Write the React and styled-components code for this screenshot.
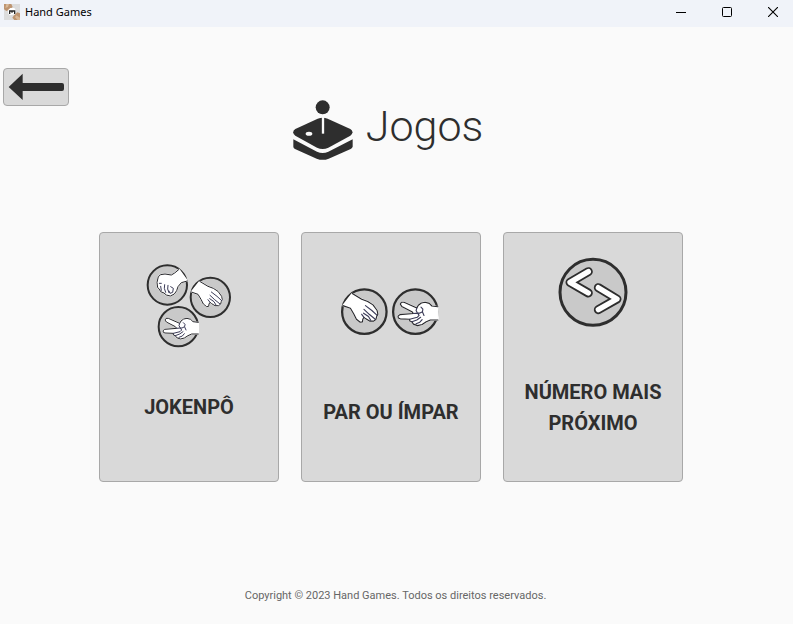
import React from "react";
import styled, { createGlobalStyle } from "styled-components";

const ink = "#2e2e2e";

const GlobalStyle = createGlobalStyle`
  * { box-sizing: border-box; }
  body { margin: 0; background: #fafafa; color: ${ink}; font-family: Roboto, sans-serif; }
  button { font: inherit; color: inherit; cursor: pointer; }
`;

const Window = styled.div`
  display: flex;
  flex-direction: column;
  min-height: 100vh;
`;

const TitleBar = styled.header`
  display: flex;
  align-items: center;
  height: 27px;
  padding-bottom: 4px;
  padding-left: 4px;
  background: #f0f3f9;
`;

const AppName = styled.span`
  flex: 1;
  padding-left: 5px;
  font: 11px/16px "Noto Sans", sans-serif;
  color: #000;
`;

const WindowButton = styled.button`
  display: flex;
  align-items: center;
  justify-content: center;
  width: 46px;
  height: 22px;
  padding: 0;
  border: 0;
  background: none;
`;

const WindowControls = styled.div`
  display: flex;
  margin-right: -3px;
`;

const Toolbar = styled.nav`
  display: flex;
  padding: 41px 3px 0;
`;

const BackButton = styled.button`
  display: flex;
  width: 66px;
  height: 38px;
  padding: 4px;
  border: 1px solid #a8a8a8;
  border-radius: 4px;
  background: #d9d9d9;
`;

const Main = styled.main`
  display: flex;
  flex: 1;
  flex-direction: column;
  align-items: center;
  padding-right: 11px;
`;

const Heading = styled.h1`
  display: flex;
  gap: 13px;
  height: 60px;
  margin: -6px 6px 72px 0;
  font-size: 43px;
  font-weight: 300;
  line-height: 52px;
`;

const Cards = styled.div`
  display: flex;
  flex-wrap: wrap;
  justify-content: center;
  gap: 22px;
`;

const Card = styled.button`
  display: flex;
  flex-direction: column;
  align-items: center;
  gap: ${(p) => p.$gap}px;
  width: 180px;
  height: 250px;
  padding: ${(p) => p.$top}px 0 0;
  border: 1px solid #a8a8a8;
  border-radius: 4px;
  background: #d9d9d9;
`;

const CardLabel = styled.span`
  font-size: 20px;
  font-weight: 700;
  line-height: 31px;
  white-space: pre-line;
`;

const Footer = styled.footer`
  padding: 0 2px 20px 0;
  font-size: 11px;
  line-height: 16px;
  text-align: center;
  color: #666;
`;

const AppIcon = () => (
  <svg width="16" height="16" viewBox="0 0 48 48" aria-hidden="true">
    <path fill="#dcdcdc" d="M0 0h48v48H0z" />
    <path fill="#bd9470" d="M0 0h22l4 9-10 8-9 4-7-5zM48 28v20H31l-6-7 5-7 10-9z" />
    <path fill="#d8b897" d="M7 0h8l-3 9-8 3zM37 34l11 7v7h-7l-8-8z" />
    <path fill="#fff" d="M13 17l6-5h12l4 6-1 13-17 3-5-7z" />
    <path fill="none" stroke="#252525" strokeWidth="4" d="M17 30v-9h15v9M24 21v5" />
  </svg>
);

const Joystick = () => (
  <svg width="60" height="60" viewBox="42 29 180 180" aria-hidden="true">
    <circle cx="131" cy="51" r="21" fill={ink} />
    <path fill={ink} d="M116 85q15-5 30 0l68 31q13 9 0 20l-66 36q-17 8-34 0l-65-36q-13-11 0-20z" />
    <path fill={ink} d="M43 147l71 37q17 8 34 0l73-37v22q-1 4-6 7l-66 29q-18 7-36 0l-65-29q-5-3-5-7z" />
    <path stroke="#fafafa" strokeWidth="7" d="M132 79v51" />
    <ellipse cx="90" cy="130" rx="10" ry="6" fill="#fafafa" />
  </svg>
);

const hands = {
  palm: {
    outline: "M-32-48L-7-33L9-27L23-18L34-3L36 7L33 12L31 20L25 25L14 25L4 19L-1 15L-4 20L-5 27L-11 28L-21 20L-28 6L-37-9L-57-16",
    details: "M3-16L20-3L34 10M-1-6L13 7L29 20M-2 4L11 13L17 23M-7 7L-1 15",
  },
  fist: {
    outline: "M35-47L22-36L12-30L-7-33L-20-31L-27-25L-31-8L-29 8L-24 12L-20 20L-10 24L-3 30L9 33L21 27L28 17L32 5L42-7L60-12",
    details: "M-24-5L-18-5M-20 4L-18 16M-8-1L-9 10L-5 22M2 1L1 12L5 23M10 5L18 10L16 22L8 25L5 18",
  },
  peace: {
    outline: "M60-13L44-15L37-22L26-25L16-23L8-17L4-10L-30-25L-37-25L-40-20L-36-14L-9 0L-5 5L-41 8L-46 12L-45 17L-40 19L-15 20L-15 25L-9 27L-5 33L6 37L18 34L29 27L40 22L60 22",
    details: "M4-10L2-3L6 4L11 4L19 0L20-7L15-12M-5 5L6 4L10 10L5 15L-15 20M-9 27L4 22L14 15M2 32L12 28L18 21M19 1L23 10",
  },
};

const HandBadge = ({ kind, x, y, scale = 1 }) => (
  <g transform={`translate(${x} ${y}) scale(${scale})`} strokeLinejoin="round" strokeLinecap="round">
    <circle r="59" fill="#c9c9c9" stroke={ink} strokeWidth="6" />
    <path d={`${hands[kind].outline}Z`} fill="#fff" stroke="#fff" strokeWidth="4" />
    <path d={hands[kind].outline} fill="none" stroke="#28282c" strokeWidth="3" />
    <path d={hands[kind].details} fill="none" stroke="#3b3b58" strokeWidth="3" />
  </g>
);

const ThreeHands = () => (
  <svg width="100" height="100" viewBox="-3 0 300 300" aria-hidden="true">
    <HandBadge kind="fist" x={82} y={90} />
    <HandBadge kind="palm" x={211} y={127} />
    <HandBadge kind="peace" x={115} y={215} />
  </svg>
);

const TwoHands = () => (
  <svg width="110" height="62" viewBox="3 0 330 186" aria-hidden="true">
    <HandBadge kind="palm" x={88} y={95} scale={1.13} />
    <HandBadge kind="peace" x={241} y={95} scale={1.13} />
  </svg>
);

const Brackets = () => (
  <svg width="86" height="84" viewBox="0 0 258 252" aria-hidden="true">
    <circle cx="129" cy="127" r="99" fill="#c9c9c9" stroke={ink} strokeWidth="9" />
    <g fill="none" strokeLinecap="round" strokeLinejoin="round">
      <path d="M115 65L60 97L115 129M145 113L201 147L145 179" stroke={ink} strokeWidth="27" />
      <path d="M115 65L60 97L115 129M145 113L201 147L145 179" stroke="#fff" strokeWidth="16" />
    </g>
  </svg>
);

const games = [
  { label: "JOKENPÔ", icon: <ThreeHands />, top: 22, gap: 37 },
  { label: "PAR OU ÍMPAR", icon: <TwoHands />, top: 47, gap: 55 },
  { label: "NÚMERO MAIS\nPRÓXIMO", icon: <Brackets />, top: 17, gap: 43 },
];

export default function App() {
  return (
    <Window>
      <GlobalStyle />
      <TitleBar>
        <AppIcon />
        <AppName>Hand Games</AppName>
        <WindowControls>
          <WindowButton aria-label="Minimizar">
            <svg width="10" height="10" viewBox="0 0 10 10"><path d="M0 5.5h10" stroke="#000" /></svg>
          </WindowButton>
          <WindowButton aria-label="Maximizar">
            <svg width="10" height="10" viewBox="0 0 10 10"><rect x=".5" y=".5" width="9" height="9" rx="1" fill="none" stroke="#000" /></svg>
          </WindowButton>
          <WindowButton aria-label="Fechar">
            <svg width="10" height="10" viewBox="0 0 10 10"><path d="M0 0l10 10M10 0L0 10" stroke="#000" strokeWidth="1.1" /></svg>
          </WindowButton>
        </WindowControls>
      </TitleBar>
      <Toolbar>
        <BackButton aria-label="Voltar">
          <svg width="56" height="28" viewBox="25 219 168 84">
            <path fill={ink} d="M27 261l42-40v28h118q6 0 6 6v12q0 6-6 6H69v27z" />
          </svg>
        </BackButton>
      </Toolbar>
      <Main>
        <Heading><Joystick />Jogos</Heading>
        <Cards>
          {games.map((g) => (
            <Card key={g.label} $top={g.top} $gap={g.gap}>
              {g.icon}
              <CardLabel>{g.label}</CardLabel>
            </Card>
          ))}
        </Cards>
      </Main>
      <Footer>Copyright © 2023 Hand Games. Todos os direitos reservados.</Footer>
    </Window>
  );
}
